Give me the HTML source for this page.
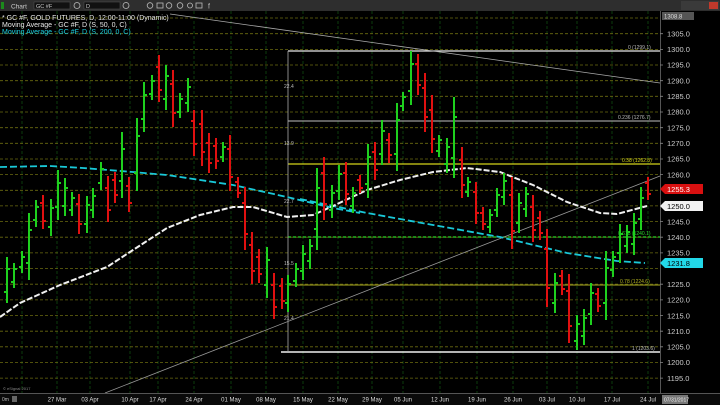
<!DOCTYPE html>
<html><head><meta charset="utf-8"><style>
html,body{margin:0;padding:0;background:#000;width:720px;height:405px;overflow:hidden;font-family:"Liberation Sans",sans-serif}
svg{display:block}
</style></head><body>
<svg width="720" height="405" viewBox="0 0 720 405" xmlns="http://www.w3.org/2000/svg" font-family="Liberation Sans, sans-serif">
<rect width="720" height="405" fill="#000"/>
<!-- toolbar -->
<rect x="0" y="0" width="720" height="11" fill="#2e2e2e"/>
<rect x="1" y="2" width="3" height="7" fill="#1c8a1c"/>
<text x="11" y="8.5" font-size="6.5" fill="#ccc">Chart</text>
<rect x="34" y="2" width="36" height="7" fill="#111" stroke="#555" stroke-width="0.5"/>
<text x="36" y="8" font-size="5.5" fill="#ccc">GC #F</text>
<circle cx="77" cy="5.5" r="3" fill="none" stroke="#bbb" stroke-width="0.8"/>
<rect x="84" y="2" width="36" height="7" fill="#111" stroke="#555" stroke-width="0.5"/>
<text x="86" y="8" font-size="5.5" fill="#ccc">D</text>
<circle cx="126" cy="5.5" r="3" fill="none" stroke="#bbb" stroke-width="0.8"/>
<g fill="none" stroke="#bbb" stroke-width="0.8">
<circle cx="150" cy="5.5" r="2.8"/><rect x="157" y="3" width="6" height="5"/><circle cx="169" cy="5.5" r="2.8"/><circle cx="180" cy="5.5" r="2.8"/><circle cx="190" cy="5.5" r="2.5"/><rect x="196" y="3" width="6" height="5"/>
</g>
<text x="208" y="8.5" font-size="7" fill="#bbb">f</text>
<rect x="681" y="1" width="38" height="9" fill="#3a3a3a"/>
<rect x="709" y="2" width="9" height="7" fill="#c0392b"/>
<!-- chart bg -->
<rect x="0" y="11" width="660" height="382" fill="#000"/>
<!-- vertical gridlines -->
<g stroke="#0d3d0d" stroke-width="1" stroke-dasharray="3,2">
<path d="M22 11V393M57 11V393M90 11V393M130 11V393M158 11V393M194 11V393M231 11V393M266 11V393M303 11V393M338 11V393M372 11V393M403 11V393M440 11V393M477 11V393M513 11V393M547 11V393M577 11V393M612 11V393M648 11V393"/>
</g>
<!-- horizontal gridlines -->
<g stroke="#6b6b10" stroke-width="0.8" stroke-dasharray="3,2">
<path d="M0 18H660M0 33.7H660M0 49.4H660M0 65H660M0 80.7H660M0 96.3H660M0 112H660M0 127.7H660M0 143.3H660M0 159H660M0 174.6H660M0 190.3H660M0 205.9H660M0 221.6H660M0 237.2H660M0 252.9H660M0 268.5H660M0 284.2H660M0 299.9H660M0 315.5H660M0 331.2H660M0 346.8H660M0 362.5H660M0 378.1H660"/>
</g>
<!-- fib -->
<g stroke-width="1.2">
<path d="M288 51H660" stroke="#e8e8e8"/>
<path d="M288 121H660" stroke="#9a9a9a"/>
<path d="M288 164H660" stroke="#d4d41a"/>
<path d="M288 237H660" stroke="#2ad42a" stroke-dasharray="3,2"/>
<path d="M288 285H660" stroke="#8a8a1a"/>
<path d="M281 352H660" stroke="#f0f0f0" stroke-width="1.6"/>
<path d="M288 51V352" stroke="#aaa" stroke-width="0.8"/>
</g>
<g font-size="5" fill="#bbb">
<text x="284" y="88">22.4</text><text x="284" y="145">13.9</text><text x="284" y="203">22.7</text><text x="284" y="265">15.5</text><text x="284" y="320">21.4</text>
<text x="628" y="49">0 (1299.1)</text><text x="618" y="119">0.236 (1276.7)</text>
<text x="622" y="162" fill="#d4d41a">0.38 (1262.8)</text><text x="618" y="235" fill="#2ad42a">0.618 (1240.1)</text>
<text x="620" y="283" fill="#b0b020">0.78 (1224.6)</text><text x="632" y="350">1 (1203.6)</text>
</g>
<!-- trendlines -->
<path d="M105 393L660 176" stroke="#999" stroke-width="0.8"/>
<path d="M170 14L660 83" stroke="#aaa" stroke-width="0.8"/>
<!-- MA 200 cyan -->
<path d="M0 167L50 166L83 168L133 172L167 175L233 185L287 197L333 208L360 213M300 199L367 213L433 225L500 237L567 253L617 261L645 263" fill="none" stroke="#19c8d8" stroke-width="1.8" stroke-dasharray="7,3"/>
<!-- MA 50 white -->
<path d="M0 317L20 303L60 285L107 267L133 250L167 228L200 215L233 207L253 207L287 217L313 215L333 206L367 190L400 180L433 172L467 168L500 172L533 185L567 202L600 213L617 214L647 206" fill="none" stroke="#f0f0f0" stroke-width="2" stroke-dasharray="6,2"/>
<!-- bars green -->
<path stroke="#1ed01e" stroke-width="2" fill="none" d="M7 257V303M4 292H7M7 269H10M14 263V288M11 282H14M14 269H17M22 251V273M19 267H22M22 257H25M29 213V280M26 263H29M29 230H32M36 200V227M33 220H36M36 207H39M51 199V236M48 227H51M51 208H54M58 170V220M55 207H58M58 183H61M65 178V216M62 206H65M65 188H68M72 192V216M69 210H72M72 198H75M87 196V233M84 224H87M87 205H90M93 188V218M90 210H93M93 196H96M101 162V190M98 183H101M101 169H104M122 132V198M119 181H122M122 149H125M137 118V191M134 173H137M137 136H140M144 82V132M141 119H144M144 95H147M152 75V100M149 94H152M152 81H155M166 65V110M163 99H166M166 76H169M180 93V118M177 112H180M180 99H183M188 78V112M185 103H188M188 87H191M223 142V162M220 157H223M223 147H226M267 247V298M264 285H267M267 260H270M288 275V312M285 303H288M288 284H291M296 263V287M293 281H296M296 269H299M303 245V280M300 271H303M303 254H306M310 239V269M307 261H310M310 246H313M317 168V250M314 229H317M317 188H320M332 185V218M329 210H332M332 193H335M339 165V200M336 191H339M339 174H342M353 187V213M350 206H353M353 193H356M368 144V198M365 184H368M368 157H371M382 120V165M379 154H382M382 131H385M397 103V171M394 154H397M397 120H400M403 92V111M400 106H403M403 97H406M411 51V105M408 91H411M411 64H414M439 135V157M436 151H439M439 140H442M447 138V173M444 164H447M447 147H450M454 97V178M451 158H454M454 117H457M468 177V197M465 192H468M468 182H471M490 209V233M487 227H490M490 215H493M497 188V217M494 210H497M497 195H500M504 173V205M501 197H504M504 181H507M519 193V233M516 223H519M519 203H522M526 187V217M523 209H526M526 194H529M555 273V313M552 303H555M555 283H558M577 315V350M574 341H577M577 324H580M584 309V345M581 336H584M584 318H587M591 283V325M588 314H591M591 293H594M606 251V320M603 303H606M606 268H609M613 251V277M610 270H613M613 257H616M620 224V263M617 253H620M620 234H623M627 225V253M624 246H627M627 232H630M634 213V255M631 244H634M634 223H637M641 187V230M638 219H641M641 198H644"/>
<!-- bars red -->
<path stroke="#e01010" stroke-width="2" fill="none" d="M43 195V229M40 203H43M43 221H46M79 194V234M76 204H79M79 224H82M108 176V222M105 188H108M108 210H111M115 172V203M112 180H115M115 195H118M129 177V212M126 186H129M129 203H132M159 55V102M156 67H159M159 90H162M173 70V127M170 84H173M173 113H176M194 110V156M191 121H194M194 144H197M202 110V166M199 124H202M202 152H205M209 133V173M206 143H209M209 163H212M216 138V169M213 146H216M216 161H219M230 135V191M227 149H230M230 177H233M238 177V198M235 182H238M238 193H241M245 187V250M242 203H245M245 234H248M252 232V284M249 245H252M252 271H255M259 249V283M256 257H259M259 274H262M274 273V319M271 285H274M274 307H277M282 278V309M279 286H282M282 301H285M324 157V220M321 173H324M324 204H327M346 162V205M343 173H346M346 194H349M360 175V193M357 180H360M360 188H363M375 142V180M372 152H375M375 170H378M389 133V163M386 140H389M389 155H392M418 54V95M415 64H418M418 85H421M425 73V132M422 88H425M425 117H428M432 95V153M429 110H432M432 139H435M462 147V198M459 160H462M462 185H465M476 182V224M473 192H476M476 213H479M483 207V230M480 213H483M483 224H486M512 177V249M509 195H512M512 231H515M533 195V242M530 207H533M533 230H536M540 211V240M537 218H540M540 233H543M547 229V307M544 249H547M547 288H550M562 270V295M559 276H562M562 289H565M569 274V343M566 291H569M569 326H572M598 288V312M595 294H598M598 306H601M648 177V200M645 183H648M648 194H651"/>
<!-- legend -->
<g font-size="7">
<text x="2" y="20" fill="#e8e8e8">* GC #F, GOLD FUTURES, D, 12:00-11:00 (Dynamic)</text>
<text x="2" y="27" fill="#e8e8e8">Moving Average - GC #F, D (S, 50, 0, C)</text>
<text x="2" y="34" fill="#1cd0e0">Moving Average - GC #F, D (S, 200, 0, C)</text>
</g>
<!-- price axis -->
<rect x="660" y="11" width="60" height="394" fill="#000"/>
<path d="M660.5 11V393" stroke="#555" stroke-width="1"/>
<rect x="662" y="12" width="32" height="8" fill="#555"/>
<text x="664" y="18.5" font-size="6" fill="#ddd">1308.8</text>
<g font-size="7.5" fill="#ccc">
<text x="667" y="36.5">1305.0</text><text x="667" y="52">1300.0</text><text x="667" y="67.5">1295.0</text><text x="667" y="83.5">1290.0</text><text x="667" y="99">1285.0</text><text x="667" y="114.5">1280.0</text><text x="667" y="130.5">1275.0</text><text x="667" y="146">1270.0</text><text x="667" y="161.5">1265.0</text><text x="667" y="177.5">1260.0</text><text x="667" y="224.5">1245.0</text><text x="667" y="240">1240.0</text><text x="667" y="255.5">1235.0</text><text x="667" y="287">1225.0</text><text x="667" y="302.5">1220.0</text><text x="667" y="318.5">1215.0</text><text x="667" y="334">1210.0</text><text x="667" y="349.5">1205.0</text><text x="667" y="365">1200.0</text><text x="667" y="381">1195.0</text>
</g>
<g stroke="#888" stroke-width="0.8"><path d="M660 33.7h3M660 49.4h3M660 65h3M660 80.7h3M660 96.3h3M660 112h3M660 127.7h3M660 143.3h3M660 159h3M660 174.6h3M660 221.6h3M660 237.2h3M660 252.9h3M660 284.2h3M660 299.9h3M660 315.5h3M660 331.2h3M660 346.8h3M660 362.5h3M660 378.1h3"/></g>
<path d="M660 189L665 184H703V194H665Z" fill="#d81010"/>
<text x="667" y="192" font-size="7.5" fill="#fff">1255.3</text>
<path d="M660 206L665 201H703V211H665Z" fill="#f2f2f2"/>
<text x="667" y="209" font-size="7.5" fill="#000">1250.0</text>
<path d="M660 263L665 258H703V268H665Z" fill="#22d8e8"/>
<text x="667" y="266" font-size="7.5" fill="#000">1231.8</text>
<!-- bottom -->
<path d="M0 393.5H720" stroke="#555" stroke-width="1"/>
<rect x="0" y="394" width="720" height="11" fill="#0a0a0a"/>
<text x="3" y="390" font-size="4" fill="#888">© eSignal 2017</text>
<text x="2" y="401" font-size="5" fill="#bbb">0m</text>
<rect x="12" y="396" width="5" height="6" fill="#666"/>
<g font-size="6" fill="#ddd" text-anchor="middle">
<text x="57" y="401.5">27 Mar</text><text x="90" y="401.5">03 Apr</text><text x="130" y="401.5">10 Apr</text><text x="158" y="401.5">17 Apr</text><text x="194" y="401.5">24 Apr</text><text x="231" y="401.5">01 May</text><text x="266" y="401.5">08 May</text><text x="303" y="401.5">15 May</text><text x="338" y="401.5">22 May</text><text x="372" y="401.5">29 May</text><text x="403" y="401.5">05 Jun</text><text x="440" y="401.5">12 Jun</text><text x="477" y="401.5">19 Jun</text><text x="513" y="401.5">26 Jun</text><text x="547" y="401.5">03 Jul</text><text x="577" y="401.5">10 Jul</text><text x="612" y="401.5">17 Jul</text><text x="648" y="401.5">24 Jul</text>
</g>
<rect x="662" y="395" width="26" height="9" fill="#777"/>
<text x="664" y="401.5" font-size="5" fill="#eee">07/31/2017</text>
</svg>
</body></html>
